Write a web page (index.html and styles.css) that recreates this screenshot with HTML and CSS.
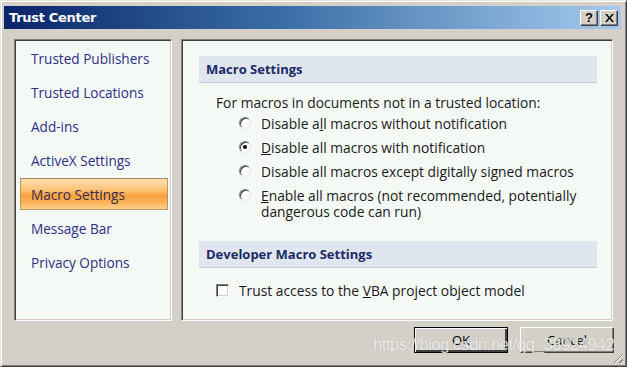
FILE: index.html
```html
<!DOCTYPE html>
<html lang="en">
<head>
    <meta charset="UTF-8">
    <title>Trust Center</title>
    <link rel="stylesheet" href="styles.css">
</head>
<body>
    <div class="window">
        <!-- Title bar -->
        <div class="titlebar">
            <span class="title">Trust Center</span>
            <div class="title-buttons">
                <span class="tbtn">?</span>
                <span class="tbtn tbtn-close">
                    <svg width="9" height="8" viewBox="0 0 9 8"><path d="M0 0h2l2.5 3 2.5-3h2L5.5 4 9 8H7L4.5 5 2 8H0l3.5-4z" fill="#000"/></svg>
                </span>
            </div>
        </div>

        <div class="main">
            <!-- Left navigation -->
            <ul class="nav panel">
                <li>Trusted Publishers</li>
                <li>Trusted Locations</li>
                <li>Add-ins</li>
                <li>ActiveX Settings</li>
                <li class="active">Macro Settings</li>
                <li>Message Bar</li>
                <li>Privacy Options</li>
            </ul>

            <!-- Settings -->
            <div class="content panel">
                <div class="section-head">Macro Settings</div>
                <p class="intro">For macros in documents not in a trusted location:</p>
                <div class="options">
                    <label class="option"><span class="radio"></span><span>Disable a<u>l</u>l macros without notification</span></label>
                    <label class="option"><span class="radio checked"></span><span><u>D</u>isable all macros with notification</span></label>
                    <label class="option"><span class="radio"></span><span>Disable all macros except di<u>g</u>itally signed macros</span></label>
                    <label class="option"><span class="radio"></span><span><u>E</u>nable all macros (not recommended, potentially<br>dangerous code can run)</span></label>
                </div>

                <div class="section-head dev">Developer Macro Settings</div>
                <label class="check-row"><span class="checkbox"></span><span>Trust access to the <u>V</u>BA project object model</span></label>
            </div>
        </div>

        <div class="footer">
            <button class="btn btn-default">OK</button>
            <button class="btn">Cancel</button>
        </div>

        <div class="watermark">https://blog.csdn.net/qq_38924942</div>
        <div class="grip"></div>
    </div>
</body>
</html>
```

FILE: styles.css
```css
* {
    margin: 0;
    padding: 0;
    box-sizing: border-box;
}

body {
    font-family: 'Open Sans', 'Noto Sans', sans-serif;
    font-size: 13.8px;
    background-color: #d4d0c8;
    overflow: hidden;
}

/* Window frame */
.window {
    position: relative;
    width: 627px;
    height: 367px;
    padding: 5px 5px 0 3px;
    background-color: #d4d0c8;
    border-top: 1px solid #e8e6e0;
    border-left: 1px solid #e8e6e0;
    border-right: 1px solid #404040;
    border-bottom: 1px solid #404040;
    box-shadow: inset 1px 1px 0 #fff, inset -1px -1px 0 #808080;
}

.titlebar {
    height: 23px;
    display: flex;
    align-items: center;
    justify-content: space-between;
    padding: 0 0 0 5px;
    background: linear-gradient(to right, #0a246a 0%, #3a6ea5 45%, #a6caf0 100%);
}

.title {
    color: #fff;
    font-family: 'DejaVu Sans', sans-serif;
    font-weight: bold;
    font-size: 13px;
    letter-spacing: -0.3px;
}

.title-buttons {
    display: flex;
    gap: 2px;
    padding-right: 3px;
}

.tbtn {
    width: 18px;
    height: 16px;
    display: flex;
    align-items: center;
    justify-content: center;
    background-color: #d4d0c8;
    border-top: 1px solid #fff;
    border-left: 1px solid #fff;
    border-right: 1px solid #404040;
    border-bottom: 1px solid #404040;
    box-shadow: inset -1px -1px 0 #808080;
    font-family: 'Liberation Sans', sans-serif;
    font-weight: bold;
    font-size: 13px;
    color: #000;
}

/* Panels */
.main {
    display: flex;
    gap: 9px;
    margin-top: 10px;
    padding-left: 10px;
    height: 282px;
}

.panel {
    background-color: #f5f9f6;
    border-top: 1px solid #808080;
    border-left: 1px solid #808080;
    border-right: 1px solid #fff;
    border-bottom: 1px solid #fff;
    box-shadow: inset 1px 1px 0 #404040, inset -1px -1px 0 #d4d0c8;
}

.nav {
    width: 158px;
    list-style: none;
    padding: 2px 3px 0 5px;
}

.nav li {
    height: 32px;
    margin-bottom: 2px;
    padding-left: 11px;
    display: flex;
    align-items: center;
    color: #2e2e86;
    font-size: 13.6px;
}

.nav li.active {
    border: 1px solid #c09660;
    border-top-color: #a8875f;
    padding-left: 10px;
    background: linear-gradient(to bottom, #fde0b0 0%, #fbc579 35%, #f7a23c 55%, #fab35b 80%, #fcd08c 100%);
    color: #3a2a58;
}

.content {
    width: 432px;
    padding: 16px 15px 0 17px;
}

.section-head {
    height: 27px;
    padding-left: 7px;
    display: flex;
    align-items: center;
    background-color: #dfe6ef;
    border-bottom: 1px solid #c6ccd6;
    color: #1c2a68;
    font-weight: bold;
    font-size: 13px;
}

.section-head.dev {
    margin-top: 17px;
}

.intro {
    margin-top: 11px;
    padding-left: 17px;
    line-height: 18px;
    color: #1a1a1a;
}

.options {
    padding-left: 40px;
}

.option {
    display: flex;
    align-items: flex-start;
    gap: 10px;
    line-height: 16px;
    padding: 4px 0;
    color: #1a1a1a;
}

.radio {
    flex: none;
    width: 12px;
    height: 12px;
    margin-top: 1px;
    border-radius: 50%;
    background-color: #fff;
    border: 1px solid;
    border-color: #808080 #e8e8e8 #e8e8e8 #808080;
    box-shadow: inset 1px 1px 0 #404040;
    position: relative;
}

.radio.checked::after {
    content: "";
    position: absolute;
    left: 3px;
    top: 3px;
    width: 4px;
    height: 4px;
    border-radius: 50%;
    background-color: #000;
}

.check-row {
    display: flex;
    align-items: center;
    gap: 10px;
    margin-top: 13px;
    padding-left: 17px;
    color: #1a1a1a;
}

.checkbox {
    width: 13px;
    height: 13px;
    background-color: #fff;
    border: 1px solid;
    border-color: #808080 #fff #fff #808080;
    box-shadow: inset 1px 1px 0 #404040, inset -1px -1px 0 #d4d0c8;
}

/* Footer buttons */
.footer {
    display: flex;
    justify-content: flex-end;
    gap: 12px;
    margin-top: 6px;
    padding-right: 7px;
}

.btn {
    width: 94px;
    height: 26px;
    background-color: #d4d0c8;
    font-family: 'Open Sans', 'Noto Sans', sans-serif;
    font-size: 13px;
    color: #000;
    border-top: 1px solid #fff;
    border-left: 1px solid #fff;
    border-right: 1px solid #404040;
    border-bottom: 1px solid #404040;
    box-shadow: inset -1px -1px 0 #808080;
}

.btn-default {
    border: 1px solid #000;
    box-shadow: inset 1px 1px 0 #fff, inset -2px -2px 0 #404040;
}

/* Overlays */
.watermark {
    position: absolute;
    left: 372px;
    top: 334px;
    font-family: 'Liberation Sans', sans-serif;
    font-size: 17px;
    letter-spacing: -0.6px;
    color: rgba(255, 255, 255, 0.75);
    text-shadow: 0 0 1px rgba(120, 120, 120, 0.5);
}

.grip {
    position: absolute;
    right: 3px;
    bottom: 3px;
    width: 12px;
    height: 12px;
    background: repeating-linear-gradient(135deg, transparent 0 2px, #808080 2px 3px, #fff 3px 4px);
    clip-path: polygon(100% 0, 100% 100%, 0 100%);
}
```
